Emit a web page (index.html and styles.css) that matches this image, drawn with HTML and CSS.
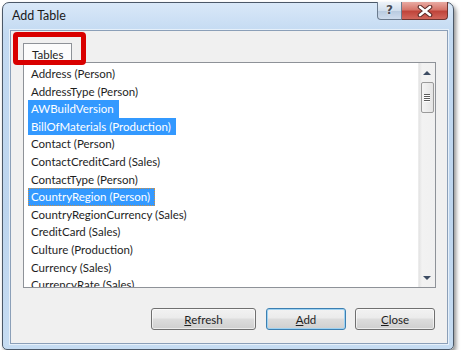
FILE: index.html
```html
<!DOCTYPE html>
<html>
    <head>
        <title>Add Table</title>
        <link rel="stylesheet" href="styles.css">
    </head>
    <body>
        <div class="window">
            <div class="titlebar">
                <span class="title">Add Table</span>
                <div class="caption-buttons">
                    <div class="help-btn">?</div>
                    <div class="close-btn">
                        <svg width="16" height="12" viewBox="0 0 16 12">
                            <path d="M3 2 L13 10 M13 2 L3 10" stroke="#5a2a26" stroke-width="4.6" stroke-linecap="round"/>
                            <path d="M3 2 L13 10 M13 2 L3 10" stroke="#ffffff" stroke-width="2.6" stroke-linecap="round"/>
                        </svg>
                    </div>
                </div>
            </div>

            <div class="client">
                <div class="tabs">
                    <div class="tab">Tables</div>
                </div>

                <div class="list">
                    <div class="items">
                        <div class="row"><span>Address (Person)</span></div>
                        <div class="row"><span>AddressType (Person)</span></div>
                        <div class="row"><span class="selected">AWBuildVersion</span></div>
                        <div class="row"><span class="selected">BillOfMaterials (Production)</span></div>
                        <div class="row"><span>Contact (Person)</span></div>
                        <div class="row"><span>ContactCreditCard (Sales)</span></div>
                        <div class="row"><span>ContactType (Person)</span></div>
                        <div class="row"><span class="selected focused">CountryRegion (Person)</span></div>
                        <div class="row"><span>CountryRegionCurrency (Sales)</span></div>
                        <div class="row"><span>CreditCard (Sales)</span></div>
                        <div class="row"><span>Culture (Production)</span></div>
                        <div class="row"><span>Currency (Sales)</span></div>
                        <div class="row"><span>CurrencyRate (Sales)</span></div>
                    </div>
                    <div class="scrollbar">
                        <div class="arrow-up"></div>
                        <div class="thumb">
                            <div class="grip"></div>
                            <div class="grip"></div>
                            <div class="grip"></div>
                            <div class="grip"></div>
                        </div>
                        <div class="track"></div>
                        <div class="arrow-down"></div>
                    </div>
                </div>

                <div class="buttons">
                    <button class="btn btn-refresh"><u>R</u>efresh</button>
                    <button class="btn btn-default"><u>A</u>dd</button>
                    <button class="btn"><u>C</u>lose</button>
                </div>

                <div class="highlight"></div>
            </div>
        </div>
    </body>
</html>
```

FILE: styles.css
```css
body {
    margin: 0;
    background-color: white;
    font-family: Lato, "Noto Sans", sans-serif;
    color: #1e1e1e;
}

.window {
    margin: 2px 0 0 2px;
    width: 452px;
    height: 348px;
    box-sizing: border-box;
    border: 1px solid #4b5868;
    border-radius: 7px 7px 5px 5px;
    background: linear-gradient(#d9e8f8, #c3daf2 30px, #bdd5ee 60%, #c6dcf2);
    box-shadow: 2px 3px 4px rgba(0, 0, 0, 0.45);
    display: flex;
    flex-direction: column;
    padding: 0 5px 5px 7px;
}

.titlebar {
    height: 27px;
    display: flex;
    justify-content: space-between;
    align-items: flex-start;
}

.title {
    font-size: 12.5px;
    margin-top: 5px;
    margin-left: 2px;
    color: #1a1a1a;
}

.caption-buttons {
    display: flex;
    margin-top: -1px;
}

.help-btn {
    width: 23px;
    height: 17px;
    border: 1px solid #6b7b8e;
    border-top: none;
    border-radius: 0 0 0 4px;
    background: linear-gradient(#eef3f9, #d2dfed 50%, #b9cbe0 55%, #cfdced);
    color: #4a4f57;
    font-family: "DejaVu Sans", sans-serif;
    font-size: 12px;
    font-weight: bold;
    line-height: 17px;
    text-align: center;
    text-shadow: 0 0 2px #ffffff;
}

.close-btn {
    width: 45px;
    height: 17px;
    border: 1px solid #6e3530;
    border-left: none;
    border-top: none;
    border-radius: 0 0 4px 0;
    background: linear-gradient(#e9aaa2, #d6766b 45%, #c0443a 55%, #d2675c);
    display: flex;
    align-items: center;
    justify-content: center;
}

.client {
    flex: 1;
    position: relative;
    border: 1px solid #8b9fb8;
    box-shadow: 0 0 0 1px #e6f0fa;
    background-color: #f0f0f0;
    padding: 12px 11px 0 12px;
}

.tabs {
    display: flex;
    height: 20px;
}

.tab {
    border: 1px solid #8e9298;
    border-bottom: none;
    background-color: #fcfcfc;
    padding: 0 8px 0 8px;
    font-size: 11.5px;
    line-height: 21px;
    position: relative;
    z-index: 1;
}

.list {
    margin-top: -1px;
    height: 226px;
    box-sizing: border-box;
    border: 1px solid #8e9298;
    background-color: white;
    display: grid;
    grid-template-columns: 1fr 17px;
    overflow: hidden;
}

.items {
    padding-top: 2px;
    overflow: hidden;
}

.row {
    height: 17.6px;
    line-height: 17.6px;
    font-size: 11.5px;
    white-space: nowrap;
}

.row span {
    display: inline-block;
    margin-left: 4px;
    padding: 0 5px 0 3px;
}

.row .selected {
    background-color: #3399ff;
    color: white;
}

.row .focused {
    outline: 1px dotted #c98f4a;
    outline-offset: -1px;
}

.scrollbar {
    background: linear-gradient(to right, #e3e3e3, #f2f2f2 3px, #f0f0f0);
    border-left: 1px solid #ececec;
    display: flex;
    flex-direction: column;
    align-items: center;
}

.arrow-up {
    margin-top: 8px;
    width: 0;
    height: 0;
    border-left: 4px solid transparent;
    border-right: 4px solid transparent;
    border-bottom: 4px solid #3d4c63;
}

.thumb {
    margin-top: 7px;
    width: 13px;
    height: 31px;
    box-sizing: border-box;
    border: 1px solid #9a9a9a;
    border-radius: 2px;
    background: linear-gradient(to right, #f4f4f4, #e4e4e4);
    display: flex;
    flex-direction: column;
    align-items: center;
    justify-content: center;
    gap: 1px;
}

.grip {
    width: 6px;
    height: 1px;
    background-color: #5c5c5c;
    box-shadow: 0 1px 0 #ffffff;
}

.track {
    flex: 1;
}

.arrow-down {
    margin-bottom: 7px;
    width: 0;
    height: 0;
    border-left: 4px solid transparent;
    border-right: 4px solid transparent;
    border-top: 4px solid #3d4c63;
}

.buttons {
    display: flex;
    justify-content: flex-end;
    gap: 9px;
    margin-top: 20px;
    padding-right: 1px;
}

.btn {
    width: 80px;
    height: 22px;
    border: 1px solid #707070;
    border-radius: 3px;
    background: linear-gradient(#f2f2f2, #ebebeb 45%, #dddddd 50%, #cfcfcf);
    font-family: Lato, "Noto Sans", sans-serif;
    font-size: 11.5px;
    color: #1e1e1e;
    padding: 0;
    box-shadow: inset 0 0 0 1px rgba(255, 255, 255, 0.6);
}

.btn-refresh {
    width: 105px;
    margin-right: 1px;
}

.btn-default {
    border-color: #3c7fb1;
    box-shadow: inset 0 0 0 1px #9ed2f2;
}

.highlight {
    position: absolute;
    left: 2px;
    top: 1px;
    width: 63px;
    height: 23px;
    border: 5px solid #d90000;
    border-radius: 4px;
    z-index: 2;
}
```
